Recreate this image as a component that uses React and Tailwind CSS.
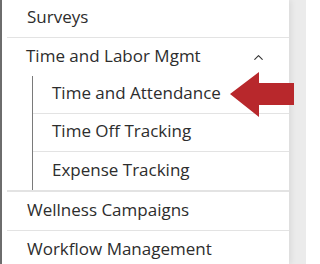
import { ChevronUp } from "lucide-react";

const subItems = ["Time and Attendance", "Time Off Tracking", "Expense Tracking"];

// red callout arrow pointing at the active sub item
const Arrow = () => (
  <svg className="absolute left-[230px] top-[72px]" width="64" height="45" viewBox="0 0 64 45">
    <polygon points="0,22 29,0 29,11 64,11 64,33 29,33 29,45" fill="#b8282c" />
  </svg>
);

export default function App() {
  return (
    <div className="relative flex h-[264px] w-[306px] overflow-hidden bg-[#ebebeb] font-['Open_Sans','Liberation_Sans',sans-serif] text-[17px] text-[#2d2d2d]">
      <div className="w-[2px] shrink-0 bg-[#6e6e6e]" />
      <nav className="w-[287px] shrink-0 bg-white pl-[5px] shadow-[2px_0_6px_rgba(0,0,0,0.08)]">
        <div className="flex h-[38px] items-center border-b border-[#e3e3e3] pb-[3px] pl-[20px]">Surveys</div>
        <div className="flex h-[38px] items-center justify-between pl-[19px] pr-[23px]">
          <span className="pb-[3px]">Time and Labor Mgmt</span>
          <ChevronUp size={15} strokeWidth={1.75} className="text-[#333]" />
        </div>
        <ul className="ml-[25px] border-l border-[#7a7a7a]">
          {subItems.map((label, i) => (
            <li
              key={label}
              className={
                "flex h-[38px] items-center pb-[3px] pl-[19px] " +
                (i < subItems.length - 1 ? "border-b border-[#e3e3e3]" : "")
              }
            >
              {label}
            </li>
          ))}
        </ul>
        <div className="border-t-2 border-[#e3e3e3]" />
        <div className="flex h-[39px] items-center border-b border-[#e3e3e3] pb-[3px] pl-[20px]">Wellness Campaigns</div>
        <div className="flex h-[38px] items-center pb-[3px] pl-[20px]">Workflow Management</div>
      </nav>
      <Arrow />
    </div>
  );
}
